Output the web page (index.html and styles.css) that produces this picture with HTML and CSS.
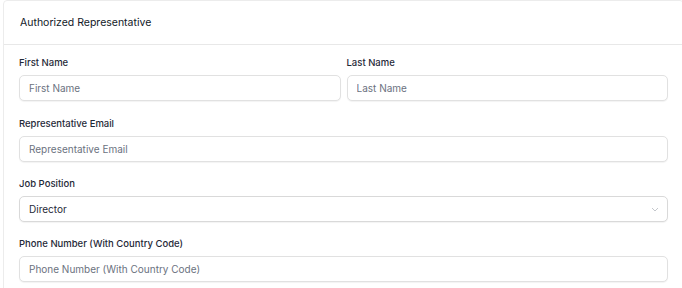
FILE: index.html
```html
<!DOCTYPE html>
<html lang="en">

<head>
    <meta charset="UTF-8">
    <meta name="viewport" content="width=device-width, initial-scale=1.0">
    <title>Authorized Representative</title>
    <link rel="stylesheet" href="styles.css">
</head>

<body>
    <div class="card">
        <div class="card-header">Authorized Representative</div>
        <div class="card-body">
            <div class="row">
                <div class="field">
                    <label class="label">First Name</label>
                    <input class="input" type="text" placeholder="First Name">
                </div>
                <div class="field">
                    <label class="label">Last Name</label>
                    <input class="input" type="text" placeholder="Last Name">
                </div>
            </div>
            <div class="field">
                <label class="label">Representative Email</label>
                <input class="input" type="email" placeholder="Representative Email">
            </div>
            <div class="field">
                <label class="label">Job Position</label>
                <div class="select">
                    <span>Director</span>
                    <svg width="8" height="5" viewBox="0 0 8 5">
                        <path d="M1 1l3 3 3-3" fill="none" stroke="#c4c7cc" stroke-width="1" />
                    </svg>
                </div>
            </div>
            <div class="field">
                <label class="label">Phone Number (With Country Code)</label>
                <input class="input" type="text" placeholder="Phone Number (With Country Code)">
            </div>
        </div>
    </div>
</body>

</html>
```

FILE: styles.css
```css
html {
    overflow: hidden;
}

body {
    margin: 0;
    background: #fff;
    font-family: Inter, "Noto Sans", sans-serif;
    color: #1f2937;
}

.card {
    width: 679px;
    margin-left: 3px;
    border: 1px solid #ececec;
    border-radius: 4px;
    background: #fff;
}

.card-header {
    height: 43px;
    padding: 0 16px;
    display: flex;
    align-items: center;
    font-size: 10.5px;
    color: #111827;
    border-bottom: 1px solid #e8e8e8;
}

.card-body {
    padding: 10px 15px 0 15px;
}

.row {
    display: grid;
    grid-template-columns: 1fr 1fr;
    gap: 6px;
    margin-bottom: 1px;
}

.field {
    display: flex;
    flex-direction: column;
    margin-bottom: 14px;
}

.label {
    font-size: 9.5px;
    font-weight: 500;
    line-height: 16px;
    margin-bottom: 4px;
    color: #1f2937;
}

.input,
.select {
    box-sizing: border-box;
    height: 26px;
    width: 100%;
    margin: 0;
    padding: 0 9px;
    border: 1px solid #e1e1e1;
    border-radius: 5px;
    box-shadow: 0 1px 1px rgba(0, 0, 0, 0.05);
    font: 400 10px Inter, "Noto Sans", sans-serif;
    color: #1f2937;
    background: #fff;
    outline: none;
}

.input::placeholder {
    color: #6b7280;
}

.select {
    display: flex;
    align-items: center;
    justify-content: space-between;
    border-color: #d9d9d9;
    padding-right: 8px;
}
```
